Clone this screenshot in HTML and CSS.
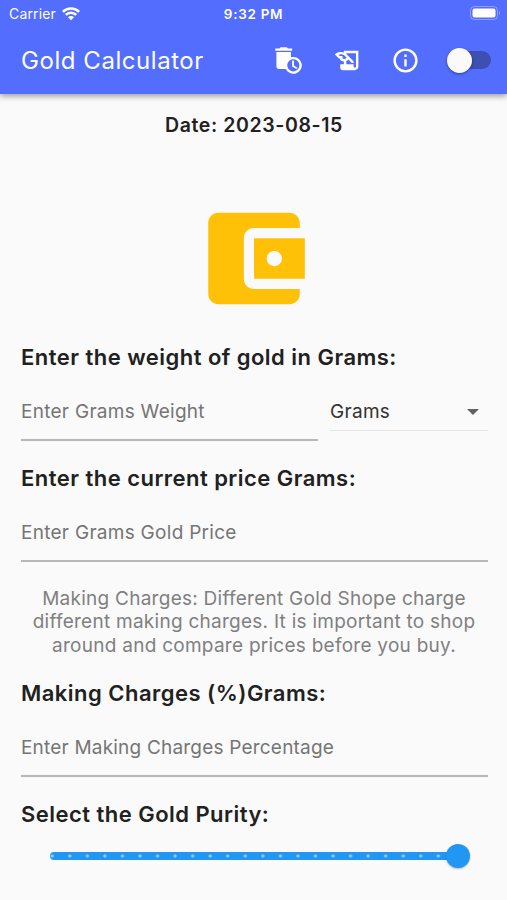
FILE: index.html
```html
<!DOCTYPE html>
<html lang="en"><head><meta charset="utf-8"><meta name="viewport" content="width=device-width"><title>Gold Calculator</title><link rel="stylesheet" href="styles.css"></head>
<body>
<header>
<div class="status"><div class="carrier"><span>Carrier</span><svg class="wifi" viewBox="0 0 20 15"><path d="M1 5.2a12.8 12.8 0 0 1 18 0M4.2 8.5a8.2 8.2 0 0 1 11.6 0"/><path class="fill" d="M6.6 11.1a4.8 4.8 0 0 1 6.8 0L10 14.5z"/></svg></div><b>9:32 PM</b><svg class="battery" viewBox="0 0 31 15"><rect class="case" x=".5" y=".5" width="27" height="13" rx="4"/><rect x="2.5" y="2.5" width="23" height="9" rx="2"/><path class="tip" d="M29 5q2 2 0 4z"/></svg></div>
<div class="bar"><h1>Gold Calculator</h1>
<svg class="icon trash" viewBox="0 0 24 24"><path d="M15 2h-3.5l-1-1h-5l-1 1H1v2h14zM16 9c-.7 0-1.37.1-2 .29V5H2v12c0 1.1.9 2 2 2h5.68A6.999 6.999 0 1 0 16 9zm0 12c-2.76 0-5-2.24-5-5s2.24-5 5-5 5 2.24 5 5-2.24 5-5 5zm.5-9H15v5l3.6 2.1.8-1.2-2.9-1.7z"/></svg>
<svg class="icon history" viewBox="0 0 24 24"><path d="M9 4v1.38c-.83-.33-1.72-.5-2.61-.5-1.79 0-3.58.68-4.95 2.05l3.33 3.33h1.11v1.11c.86.86 1.98 1.31 3.11 1.36V15H6v3c0 1.1.9 2 2 2h10c1.66 0 3-1.34 3-3V4H9zm-1.11 6.41V8.26H5.61L4.57 7.22a5.07 5.07 0 0 1 1.82-.34c1.34 0 2.59.52 3.54 1.46l1.41 1.41-.2.2a2.7 2.7 0 0 1-1.92.8c-.47 0-.93-.12-1.33-.34zM19 17c0 .55-.45 1-1 1s-1-.45-1-1v-2h-6v-2.59c.57-.23 1.1-.57 1.56-1.03l.2-.2L15.59 14H17v-1.41l-6-5.97V6h8v11z"/></svg>
<svg class="icon info" viewBox="0 0 24 24"><path d="M11 7h2v2h-2zm0 4h2v6h-2zm1-9a10 10 0 1 0 0 20 10 10 0 0 0 0-20zm0 18a8 8 0 1 1 0-16 8 8 0 0 1 0 16z"/></svg>
<div class="switch"><i></i></div></div>
</header>
<main>
<p class="date">Date: 2023-08-15</p>
<svg class="wallet" viewBox="0 0 24 24"><path d="M21 18v1c0 1.1-.9 2-2 2H5c-1.11 0-2-.9-2-2V5c0-1.1.89-2 2-2h14c1.1 0 2 .9 2 2v1h-9c-1.11 0-2 .9-2 2v8c0 1.1.89 2 2 2zm-9-2h10V8H12zm4-2.5c-.83 0-1.5-.67-1.5-1.5s.67-1.5 1.5-1.5 1.5.67 1.5 1.5-.67 1.5-1.5 1.5z"/></svg>
<h2>Enter the weight of gold in Grams:</h2>
<div class="row"><div class="field">Enter Grams Weight</div><div class="select"><span>Grams</span><i></i></div></div>
<h2>Enter the current price Grams:</h2><div class="field">Enter Grams Gold Price</div>
<p class="note">Making Charges: Different Gold Shope charge<br>different making charges. It is important to shop<br>around and compare prices before you buy.</p>
<h2>Making Charges (%)Grams:</h2><div class="field percent">Enter Making Charges Percentage</div>
<h2>Select the Gold Purity:</h2><div class="slider"><i></i></div>
</main></body></html>
```
FILE: styles.css
```css
*{box-sizing:border-box}
body{margin:0;height:900px;overflow:hidden;background:#fafafa;color:#212121;font-family:Inter,sans-serif}
header{height:94px;background:#536dfe;color:#fff;box-shadow:0 2px 6px #0006}
.status{height:27px;padding:0 6px 0 9px;display:grid;grid-template-columns:1fr auto 1fr;align-items:center;font-size:14px}
.status b{font-size:13.5px;font-weight:600;letter-spacing:.7px;margin:0 -1px 0 -4px}
.carrier{display:flex;align-items:center;gap:6px;letter-spacing:.15px}
.wifi{width:18px;height:14px;fill:none;stroke:#fff;stroke-width:2.8}.wifi .fill{fill:#fff;stroke:none}
.battery{justify-self:end;width:31px;height:15px;fill:#fff}
.battery .case{fill:none;stroke:#ffffff58}
.battery .tip{fill:#ffffff70}
.bar{height:66px;padding-left:21px;display:flex;align-items:center}
h1{width:253px;margin:0;font-size:24px;font-weight:400;letter-spacing:.55px;flex:none}
.icon{width:29px;height:29px;fill:#fff;flex:none}.history{margin-left:30px}.info{margin-left:29px}
.switch{width:43px;height:18px;border-radius:9px;background:#3d4fb0;margin-left:28px}
.switch i{display:block;width:25px;height:25px;margin:-3.5px 0 0 -1px;border-radius:50%;background:#fafafa;box-shadow:0 1px 3px #0006}
main{padding:0 19px 0 21px}
.date{height:24px;margin:19px 0 60px -1px;text-align:center;font-size:19.5px;line-height:24px;font-weight:600;letter-spacing:.6px}
.wallet{display:block;width:122px;height:122px;margin:0 auto 22px;fill:#ffc107;transform:translate(-1px,.5px)}
h2{margin:0;height:30px;line-height:32px;font-size:22px;font-weight:600;letter-spacing:.47px}
.field{height:70px;margin-bottom:21px;padding-top:11px;border-bottom:2px solid #b8b8b8;color:#757575;font-size:19px;line-height:60px;letter-spacing:.28px}
.row{display:grid;grid-template-columns:297px 158px;gap:12px}
.select{height:60px;padding:11px 9px 0 0;border-bottom:1px solid #e4e4e4;font-size:19px;line-height:60px;display:flex;justify-content:space-between;align-items:flex-start;letter-spacing:.3px}
.select span{color:#333}
.select i{margin-top:27px;border:6px solid transparent;border-top-color:#616161;border-bottom:0}
.note{margin:25px 0 20px -1px;text-align:center;color:#808080;font-size:19px;line-height:23.3px;letter-spacing:.26px}
.percent{letter-spacing:.2px}
.slider{height:8px;margin:24px 29px 0;border-radius:4px;background:radial-gradient(circle,#90caf9 1.2px,transparent 2px) -6.5px 0/17.55px 8px repeat-x #2196f3}
.slider i{display:block;width:24px;height:24px;margin-left:auto;border-radius:50%;background:#2196f3;box-shadow:0 1px 2px #0004;transform:translate(11px,-8px)}
```
